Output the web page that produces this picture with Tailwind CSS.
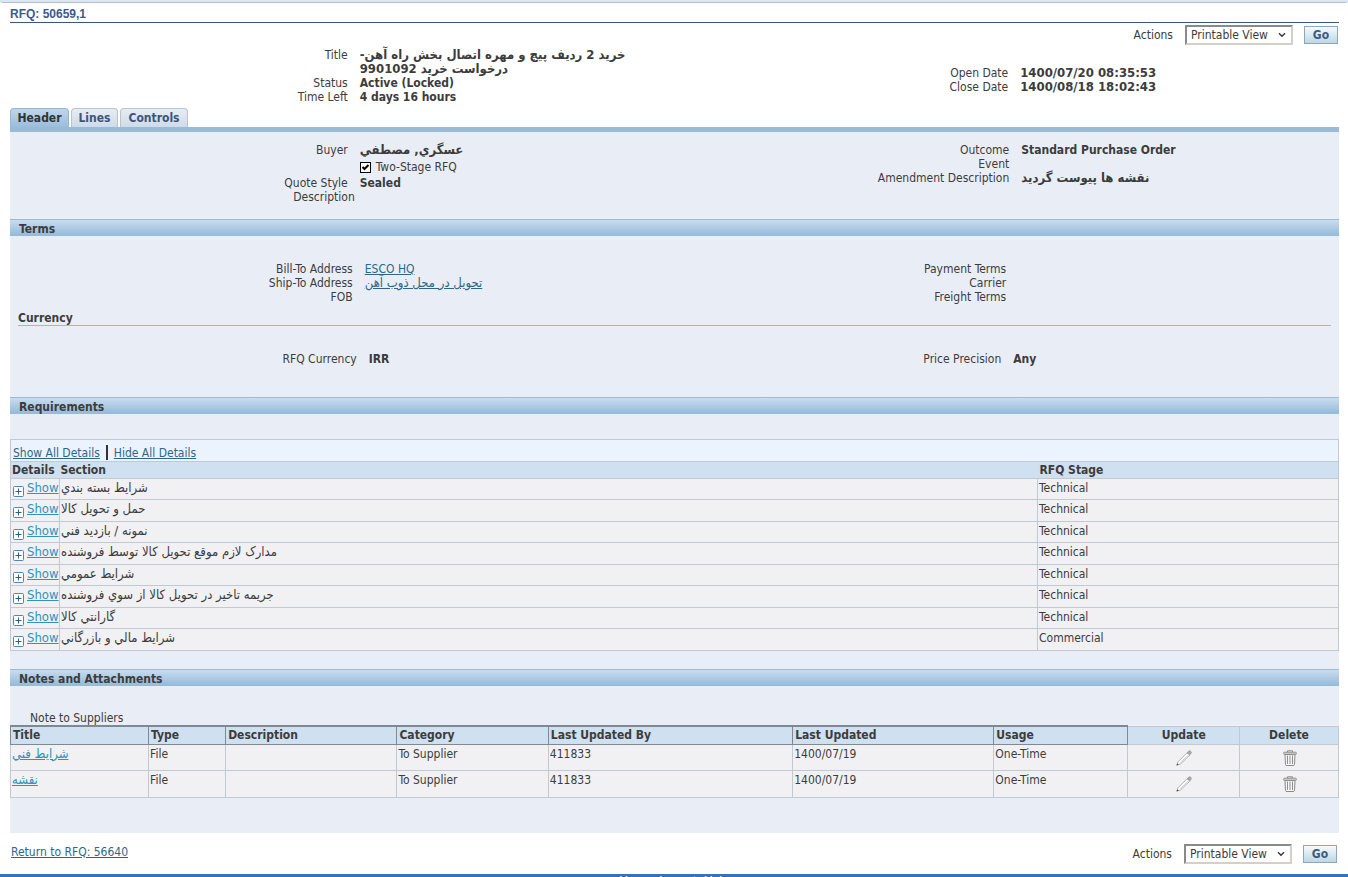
<!DOCTYPE html>
<html lang="en">
<head>
<meta charset="utf-8">
<title>RFQ: 50659,1</title>
<script src="https://cdn.jsdelivr.net/npm/@tailwindcss/browser@4"></script>
</head>
<body class="h-screen overflow-hidden bg-white font-['DejaVu_Sans_Condensed','Noto_Sans',sans-serif] text-xs leading-[14px] text-[#3c3c3c]">
<svg class="hidden" aria-hidden="true">
  <symbol id="plus" viewBox="0 0 11 11"><rect x=".5" y=".5" width="10" height="10" rx="1" fill="#fff" stroke="#4f86b8"/><path d="M2.5 5.5h6M5.5 2.5v6" stroke="#2c6088" fill="none"/></symbol>
  <symbol id="pencil" viewBox="0 0 16 16"><path d="M1 15 2 11.800 11.200 2.600 13.800 5 4.400 14Z" fill="#fff" stroke="#9a9a9a" stroke-width=".8"/><path d="M11 2.800 13 .9Q14.300 .5 15 1.600T15 3.400L13.600 5Z" fill="#a9a9a9" stroke="#9a9a9a" stroke-width=".8"/><path d="M4 12.800 12.600 4.600" stroke="#d0d0d0" stroke-width=".9"/><path d="M.4 15.600 1.200 13.400 2.800 14.800Z" fill="#444"/></symbol>
  <symbol id="trash" viewBox="0 0 14 16"><path d="M2 4.500 2.500 14.500Q2.600 15.500 4 15.500H10Q11.400 15.500 11.500 14.500L12 4.500Z" fill="#f6f6f6" stroke="#8a8a8a"/><path d="M4.500 5.500v8.500M7 5.500v8.500M9.500 5.500v8.500" stroke="#8f8f8f"/><rect x=".6" y="2.200" width="12.800" height="2.300" rx="1" fill="#c9c9c9" stroke="#8a8a8a" stroke-width=".9"/><path d="M4.500 2V.8H9.500V2" fill="none" stroke="#8a8a8a"/></symbol>
  <symbol id="chevron" viewBox="0 0 8 6"><path d="M1 1.200 4 4.200 7 1.200" fill="none" stroke="#333" stroke-width="1.400"/></symbol>
</svg>

<div class="h-[3px] rounded-b border-b border-[#a9c2da] bg-[#dbe6f2]"></div>

<main class="mx-[10px] mr-[9px]">
  <h1 class="flex h-5 items-center border-b border-[#3c5580] pt-[2px] font-['Liberation_Sans',sans-serif] text-xs font-bold text-[#3c5a8c]">RFQ: 50659,1</h1>

  <form class="mt-[2px] flex h-5 items-center justify-end pr-px" onsubmit="return false">
    <label for="actions-top" class="mr-3">Actions</label>
    <span class="relative mr-[11px] flex">
      <select id="actions-top" class="h-5 w-[108px] appearance-none border-2 border-[#d4d0c8] border-t-[#8a8a8a] border-l-[#8a8a8a] bg-white pl-1 text-xs leading-4"><option>Printable View</option></select>
      <svg class="pointer-events-none absolute top-[7px] right-[7px] h-[6px] w-2"><use href="#chevron"/></svg>
    </span>
    <button class="h-[18px] w-[34px] border border-[#8ba6bd] bg-linear-to-b from-[#f5fafd] to-[#bcd8e6] text-xs leading-4 font-bold text-[#3f5c80]">Go</button>
  </form>

  <section class="mt-[3px] grid h-[57px] grid-cols-2">
    <dl class="grid grid-cols-[338fr_315fr] content-start gap-x-3 text-right">
      <dt>Title</dt><dd dir="rtl" class="text-left text-[13px] leading-[14px] font-bold whitespace-nowrap">خريد 2 رديف پيچ و مهره اتصال بخش راه آهن-<br>درخواست خريد 9901092</dd>
      <dt>Status</dt><dd class="text-left font-bold">Active (Locked)</dd>
      <dt>Time Left</dt><dd class="text-left font-bold">4 days 16 hours</dd>
    </dl>
    <dl class="grid grid-cols-[334fr_319fr] content-start gap-x-3 pt-[18px] text-right">
      <dt>Open Date</dt><dd class="text-left text-[13px] leading-[14px] font-bold">1400/07/20 08:35:53</dd>
      <dt>Close Date</dt><dd class="text-left text-[13px] leading-[14px] font-bold">1400/08/18 18:02:43</dd>
    </dl>
  </section>

  <nav class="mt-[3px] flex gap-[2px] border-b-[5px] border-[#9bbad8] font-bold" aria-label="RFQ sections">
    <a href="#" aria-current="page" class="flex h-[19px] w-[59px] items-center justify-center rounded-t border border-b-0 border-[#9bb5cf] bg-linear-to-b from-[#bdd6ec] to-[#9bbddc] text-[#333]">Header</a>
    <a href="#" class="flex h-[19px] w-[47px] items-center justify-center rounded-t border border-b-0 border-[#b8c3d0] bg-linear-to-b from-[#e6ecf3] to-[#cfdbe8] text-[#3c5580]">Lines</a>
    <a href="#" class="flex h-[19px] w-[68px] items-center justify-center rounded-t border border-b-0 border-[#b8c3d0] bg-linear-to-b from-[#e6ecf3] to-[#cfdbe8] text-[#3c5580]">Controls</a>
  </nav>

  <div class="bg-[#e9eef6] pb-[35px]">
    <section class="grid h-[87px] grid-cols-2 pt-[11px]">
      <div>
        <dl class="grid grid-cols-[338fr_315fr] gap-x-3 text-right">
          <dt>Buyer</dt><dd dir="rtl" class="text-left text-[13px] leading-[14px] font-bold">عسگري, مصطفي</dd>
          <dd class="col-start-2 flex h-[19px] items-center gap-[5px] pt-px text-left">
            <span class="relative flex">
              <input id="two-stage" type="checkbox" checked class="peer h-[11px] w-[11px] appearance-none border border-black bg-white">
              <svg class="pointer-events-none absolute inset-0 hidden h-[11px] w-[11px] peer-checked:block" viewBox="0 0 11 11"><path d="M2.500 5 4.500 7 8.500 3" fill="none" stroke="#000" stroke-width="2"/></svg>
            </span>
            <label for="two-stage">Two-Stage RFQ</label>
          </dd>
          <dt>Quote Style</dt><dd class="text-left font-bold">Sealed</dd>
        </dl>
        <dl class="grid grid-cols-[345fr_308fr] gap-x-3 text-right"><dt>Description</dt><dd></dd></dl>
      </div>
      <dl class="grid grid-cols-[335fr_318fr] content-start gap-x-3 text-right">
        <dt>Outcome</dt><dd class="text-left font-bold">Standard Purchase Order</dd>
        <dt>Event</dt><dd></dd>
        <dt>Amendment Description</dt><dd dir="rtl" class="text-left text-[13px] leading-[14px] font-bold">نقشه ها پيوست گرديد</dd>
      </dl>
    </section>

    <section>
      <h2 class="flex h-[17px] items-center border-t border-[#9fb9d2] bg-linear-to-b from-[#c9dcee] to-[#93b9da] px-[9px] pt-px font-bold">Terms</h2>
      <div class="grid grid-cols-2 pt-[26px]">
        <dl class="grid grid-cols-[343fr_310fr] gap-x-3 text-right">
          <dt>Bill-To Address</dt><dd class="text-left"><a href="#" class="text-[#2f6688] underline">ESCO HQ</a></dd>
          <dt>Ship-To Address</dt><dd class="text-left text-[13px] leading-[14px]"><a href="#" class="text-[#2f6688] underline">تحويل در محل ذوب آهن</a></dd>
          <dt>FOB</dt><dd></dd>
        </dl>
        <dl class="grid grid-cols-[332fr_321fr] gap-x-3 text-right">
          <dt>Payment Terms</dt><dd></dd>
          <dt>Carrier</dt><dd></dd>
          <dt>Freight Terms</dt><dd></dd>
        </dl>
      </div>
      <h3 class="mx-2 mt-[7px] border-b border-[#9db9d8] font-bold">Currency</h3>
      <div class="grid h-[71px] grid-cols-2 pt-[26px]">
        <dl class="grid grid-cols-[347fr_306fr] content-start gap-x-3 text-right"><dt>RFQ Currency</dt><dd class="text-left font-bold">IRR</dd></dl>
        <dl class="grid grid-cols-[327fr_326fr] content-start gap-x-3 text-right"><dt>Price Precision</dt><dd class="text-left font-bold">Any</dd></dl>
      </div>
    </section>

    <section>
      <h2 class="flex h-[17px] items-center border-t border-[#9fb9d2] bg-linear-to-b from-[#c9dcee] to-[#93b9da] px-[9px] pt-px font-bold">Requirements</h2>
      <div class="mt-[25px] flex h-[22px] items-center border border-b-0 border-[#c3c9d3] bg-[#ebf4fe] pt-1 pl-[2px]">
        <a href="#" class="text-[#2f6688] underline">Show All Details</a>
        <span class="mx-[6px] h-[15px] w-[2px] bg-[#333]"></span>
        <a href="#" class="text-[#2f6688] underline">Hide All Details</a>
      </div>
      <table class="w-full table-fixed border-collapse border border-[#c3c9d3] bg-[#f1f1f4] [&_td]:border [&_td]:border-[#c3c9d3] [&_td]:p-0 [&_td]:pl-px [&_td]:align-top [&_tbody_tr]:odd:h-[21px] [&_tbody_tr]:even:h-[22px]">
        <colgroup><col class="w-[49px]"><col><col class="w-[301px]"></colgroup>
        <thead><tr class="h-[17px] bg-[#cfe0f0] text-left"><th class="p-0 pl-px">Details</th><th class="p-0 pl-px">Section</th><th class="p-0 pl-[2px]">RFQ Stage</th></tr></thead>
        <tbody>
          <tr><td><a href="#" class="flex items-start gap-[3px] pl-px text-[13px] leading-[14px] text-[#2f93bd]"><svg class="mt-[7px] h-[11px] w-[11px]"><use href="#plus"/></svg><span class="pt-[2px] underline">Show</span></a></td><td class="pt-[2px]! text-[13px] leading-[14px]">شرايط بسته بندي</td><td class="pt-[2px]!">Technical</td></tr>
          <tr><td><a href="#" class="flex items-start gap-[3px] pl-px text-[13px] leading-[14px] text-[#2f93bd]"><svg class="mt-[7px] h-[11px] w-[11px]"><use href="#plus"/></svg><span class="pt-[2px] underline">Show</span></a></td><td class="pt-[2px]! text-[13px] leading-[14px]">حمل و تحويل کالا</td><td class="pt-[2px]!">Technical</td></tr>
          <tr><td><a href="#" class="flex items-start gap-[3px] pl-px text-[13px] leading-[14px] text-[#2f93bd]"><svg class="mt-[7px] h-[11px] w-[11px]"><use href="#plus"/></svg><span class="pt-[2px] underline">Show</span></a></td><td class="pt-[2px]! text-[13px] leading-[14px]">نمونه / بازديد فني</td><td class="pt-[2px]!">Technical</td></tr>
          <tr><td><a href="#" class="flex items-start gap-[3px] pl-px text-[13px] leading-[14px] text-[#2f93bd]"><svg class="mt-[7px] h-[11px] w-[11px]"><use href="#plus"/></svg><span class="pt-[2px] underline">Show</span></a></td><td class="pt-[2px]! text-[13px] leading-[14px]">مدارک لازم موقع تحويل کالا توسط فروشنده</td><td class="pt-[2px]!">Technical</td></tr>
          <tr><td><a href="#" class="flex items-start gap-[3px] pl-px text-[13px] leading-[14px] text-[#2f93bd]"><svg class="mt-[7px] h-[11px] w-[11px]"><use href="#plus"/></svg><span class="pt-[2px] underline">Show</span></a></td><td class="pt-[2px]! text-[13px] leading-[14px]">شرايط عمومي</td><td class="pt-[2px]!">Technical</td></tr>
          <tr><td><a href="#" class="flex items-start gap-[3px] pl-px text-[13px] leading-[14px] text-[#2f93bd]"><svg class="mt-[7px] h-[11px] w-[11px]"><use href="#plus"/></svg><span class="pt-[2px] underline">Show</span></a></td><td class="pt-[2px]! text-[13px] leading-[14px]">جريمه تاخير در تحويل کالا از سوي فروشنده</td><td class="pt-[2px]!">Technical</td></tr>
          <tr><td><a href="#" class="flex items-start gap-[3px] pl-px text-[13px] leading-[14px] text-[#2f93bd]"><svg class="mt-[7px] h-[11px] w-[11px]"><use href="#plus"/></svg><span class="pt-[2px] underline">Show</span></a></td><td class="pt-[2px]! text-[13px] leading-[14px]">گارانتي کالا</td><td class="pt-[2px]!">Technical</td></tr>
          <tr><td><a href="#" class="flex items-start gap-[3px] pl-px text-[13px] leading-[14px] text-[#2f93bd]"><svg class="mt-[7px] h-[11px] w-[11px]"><use href="#plus"/></svg><span class="pt-[2px] underline">Show</span></a></td><td class="pt-[2px]! text-[13px] leading-[14px]">شرايط مالي و بازرگاني</td><td class="pt-[2px]!">Commercial</td></tr>
        </tbody>
      </table>
    </section>

    <section class="pt-[18px]">
      <h2 class="flex h-[17px] items-center border-t border-[#9fb9d2] bg-linear-to-b from-[#c9dcee] to-[#93b9da] px-[9px] pt-px font-bold">Notes and Attachments</h2>
      <h3 class="pt-[25px] pl-5">Note to Suppliers</h3>
      <table class="w-full table-fixed border-collapse bg-[#f1f1f4] [&_td]:border [&_td]:border-[#c3c9d3] [&_td]:p-0 [&_td]:pt-[2px] [&_td]:pl-px [&_td]:align-top">
        <colgroup><col class="w-[10.4%]"><col class="w-[5.8%]"><col class="w-[12.9%]"><col class="w-[11.4%]"><col class="w-[18.4%]"><col class="w-[15.15%]"><col class="w-[10.1%]"><col class="w-[8.4%]"><col></colgroup>
        <thead><tr class="h-[18px] bg-[#cfe0f0] text-left">
          <th class="border border-t-2 border-[#808894] p-0 pl-[2px]">Title</th><th class="border border-t-2 border-[#808894] p-0 pl-[2px]">Type</th><th class="border border-t-2 border-[#808894] p-0 pl-[2px]">Description</th><th class="border border-t-2 border-[#808894] p-0 pl-[2px]">Category</th><th class="border border-t-2 border-[#808894] p-0 pl-[2px]">Last Updated By</th><th class="border border-t-2 border-[#808894] p-0 pl-[2px]">Last Updated</th><th class="border border-t-2 border-[#808894] p-0 pl-[2px]">Usage</th><th class="border border-[#c3c9d3] p-0 text-center">Update</th><th class="border border-[#c3c9d3] p-0 text-center">Delete</th>
        </tr></thead>
        <tbody>
          <tr class="h-[26px]"><td class="text-[13px] leading-[14px]"><a href="#" class="text-[#2f93bd] underline">شرايط فني</a></td><td>File</td><td></td><td>To Supplier</td><td>411833</td><td>1400/07/19</td><td>One-Time</td><td><button aria-label="Update" class="mx-auto block pt-[3px]"><svg class="h-4 w-4"><use href="#pencil"/></svg></button></td><td><button aria-label="Delete" class="mx-auto block pt-[3px]"><svg class="h-4 w-[14px]"><use href="#trash"/></svg></button></td></tr>
          <tr class="h-[27px]"><td class="text-[13px] leading-[14px]"><a href="#" class="text-[#2f93bd] underline">نقشه</a></td><td>File</td><td></td><td>To Supplier</td><td>411833</td><td>1400/07/19</td><td>One-Time</td><td><button aria-label="Update" class="mx-auto block pt-[3px]"><svg class="h-4 w-4"><use href="#pencil"/></svg></button></td><td><button aria-label="Delete" class="mx-auto block pt-[3px]"><svg class="h-4 w-[14px]"><use href="#trash"/></svg></button></td></tr>
        </tbody>
      </table>
    </section>
  </div>

  <div class="flex h-[41px] items-start justify-between pt-[11px]">
    <a href="#" class="pt-px pl-px text-[#2f6688] underline">Return to RFQ: 56640</a>
    <form class="flex h-5 items-center pr-[2px]" onsubmit="return false">
      <label for="actions-bottom" class="mr-3">Actions</label>
      <span class="relative mr-[11px] flex">
        <select id="actions-bottom" class="h-5 w-[108px] appearance-none border-2 border-[#d4d0c8] border-t-[#8a8a8a] border-l-[#8a8a8a] bg-white pl-1 text-xs leading-4"><option>Printable View</option></select>
        <svg class="pointer-events-none absolute top-[7px] right-[7px] h-[6px] w-2"><use href="#chevron"/></svg>
      </span>
      <button class="h-[18px] w-[34px] border border-[#8ba6bd] bg-linear-to-b from-[#f5fafd] to-[#bcd8e6] text-xs leading-4 font-bold text-[#3f5c80]">Go</button>
    </form>
  </div>
</main>
<footer class="flex h-5 justify-center gap-2 bg-[#3672b9] font-['Liberation_Sans',sans-serif] text-white"><a href="#">Home</a><a href="#">Logout</a><a href="#">Help</a></footer>
</body>
</html>
